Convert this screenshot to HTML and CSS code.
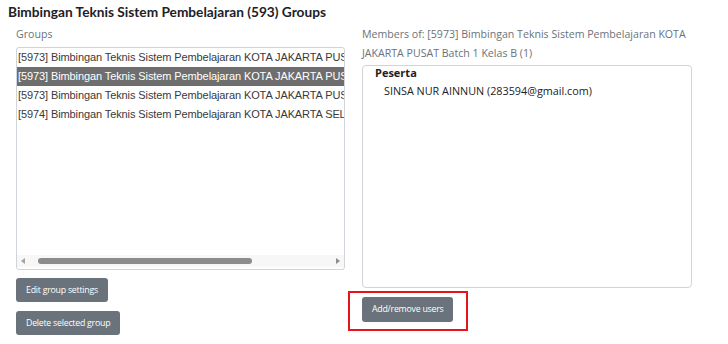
FILE: index.html
```html
<!DOCTYPE html>
<html lang="en">
<head>
    <meta charset="UTF-8">
    <title>Groups</title>
    <link rel="stylesheet" href="styles.css">
</head>
<body>
    <h3 class="page-title">Bimbingan Teknis Sistem Pembelajaran (593) Groups</h3>

    <div class="groups-layout">
        <div class="col">
            <label class="col-label">Groups</label>
            <div class="listbox">
                <div class="listbox-items">
                    <div class="opt">[5973] Bimbingan Teknis Sistem Pembelajaran KOTA JAKARTA PUSAT Batch 1 Kelas A (1)</div>
                    <div class="opt selected">[5973] Bimbingan Teknis Sistem Pembelajaran KOTA JAKARTA PUSAT Batch 1 Kelas B (1)</div>
                    <div class="opt">[5973] Bimbingan Teknis Sistem Pembelajaran KOTA JAKARTA PUSAT Batch 1 Kelas C (1)</div>
                    <div class="opt">[5974] Bimbingan Teknis Sistem Pembelajaran KOTA JAKARTA SELATAN Batch 1 Kelas A (1)</div>
                </div>
                <div class="hscroll">
                    <span class="arrow left"></span>
                    <div class="track"><div class="thumb"></div></div>
                    <span class="arrow right"></span>
                </div>
            </div>
            <div class="btn-stack">
                <button type="button" class="btn">Edit group settings</button>
                <button type="button" class="btn">Delete selected group</button>
            </div>
        </div>

        <div class="col">
            <label class="col-label">Members of: [5973] Bimbingan Teknis Sistem Pembelajaran KOTA JAKARTA PUSAT Batch 1 Kelas B (1)</label>
            <div class="members">
                <div class="role">Peserta</div>
                <div class="member">SINSA NUR AINNUN (283594@gmail.com)</div>
            </div>
            <div class="highlight">
                <button type="button" class="btn">Add/remove users</button>
            </div>
        </div>
    </div>
</body>
</html>
```

FILE: styles.css
```css
body {
    font-family: "Open Sans", Arial, sans-serif;
    margin: 0;
    padding: 0 8px;
    color: #1d2125;
    background: #fff;
}
.page-title {
    font-family: Lato, "Open Sans", sans-serif;
    font-size: 13.7px;
    font-weight: bold;
    line-height: 20px;
    margin: 2px 0 0;
}
.groups-layout {
    display: flex;
    gap: 16px;
    padding-left: 8px;
}
.col {
    width: 330px;
    display: flex;
    flex-direction: column;
}
.col-label {
    font-size: 10.6px;
    line-height: 19px;
    color: #6a737b;
    margin-top: 3px;
}
.listbox {
    height: 221px;
    width: 327px;
    margin-top: 3px;
    border: 1px solid #ced4da;
    border-radius: 3px;
    display: flex;
    flex-direction: column;
    overflow: hidden;
}
.listbox-items {
    flex: 1;
    overflow: hidden;
}
.opt {
    font-family: "Liberation Sans", Arial, sans-serif;
    font-size: 11px;
    letter-spacing: -0.1px;
    line-height: 19px;
    color: #3a3a3a;
    white-space: nowrap;
    padding-left: 1px;
}
.opt.selected {
    background-color: #6e6e6e;
    color: #fff;
}
.hscroll {
    display: flex;
    align-items: center;
    height: 12px;
    background: #f7f7f7;
    margin-bottom: 2px;
}
.arrow {
    width: 0;
    height: 0;
    border-top: 3px solid transparent;
    border-bottom: 3px solid transparent;
}
.arrow.left {
    border-right: 4px solid #a3a3a3;
    margin: 0 6px 0 4px;
}
.arrow.right {
    border-left: 4px solid #8c8c8c;
    margin: 0 4px 0 6px;
}
.track {
    flex: 1;
}
.thumb {
    width: 214px;
    height: 6px;
    margin-left: 7px;
    border-radius: 3px;
    background: #8c8c8c;
}
.members {
    height: 221px;
    margin-top: 2px;
    border: 1px solid #ced4da;
    border-radius: 4px;
    padding: 0 0 0 12px;
}
.role {
    font-size: 11px;
    font-weight: bold;
    line-height: 14px;
    margin-top: 0;
}
.member {
    font-size: 10.8px;
    line-height: 18px;
    padding-left: 9px;
    margin-top: 2px;
}
.btn-stack {
    display: flex;
    flex-direction: column;
    align-items: flex-start;
    gap: 9px;
    margin-top: 8px;
}
.btn {
    font-family: "Open Sans", sans-serif;
    font-size: 8.8px;
    letter-spacing: -0.25px;
    height: 24px;
    padding: 0 10px;
    background-color: #6a737b;
    color: #fff;
    border: none;
    border-radius: 3px;
}
.highlight {
    align-self: flex-start;
    margin: 3px 0 0 -14px;
    padding: 2px 13px 7px 12px;
    border: 2px solid #e8141a;
}
.highlight .btn {
    height: 25px;
}
```
